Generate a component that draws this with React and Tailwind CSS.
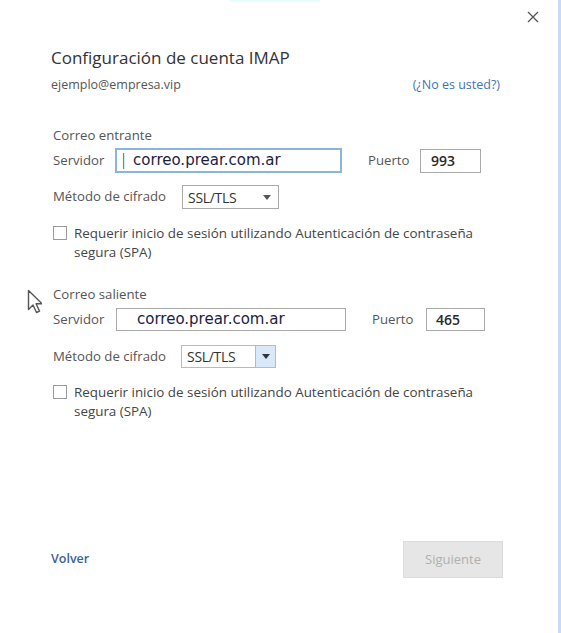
import React from "react";

const Caret = ({ className }) => (
  <svg width="8" height="5" viewBox="0 0 8 5" className={className}>
    <path d="M0 0h8L4 5z" fill="currentColor" />
  </svg>
);

const SpaCheck = () => (
  <div className="flex items-start gap-[7px] text-[13.4px] leading-[19px] text-[#444]">
    <div className="mt-[2px] h-[14px] w-[14px] shrink-0 border border-[#9a9a9a] bg-white" />
    <div>
      <div>Requerir inicio de sesión utilizando Autenticación de contraseña</div>
      <div>segura (SPA)</div>
    </div>
  </div>
);

export default function App() {
  return (
    <div
      className="relative h-[633px] w-[561px] overflow-hidden bg-white border-r-[3px] border-[#c7dbf3]"
      style={{ fontFamily: '"Open Sans", "Noto Sans", sans-serif' }}
    >
      {/* top faint strip */}
      <div className="absolute left-[230px] top-0 h-[2px] w-[90px] bg-[#e8fbff]" />

      {/* close */}
      <svg
        className="absolute left-[527px] top-[11px]"
        width="12"
        height="12"
        viewBox="0 0 12 12"
      >
        <path d="M1 1L11 11M11 1L1 11" stroke="#555" strokeWidth="1.3" />
      </svg>

      {/* mouse pointer */}
      <svg
        className="absolute left-[27px] top-[289px]"
        width="15"
        height="25"
        viewBox="0 0 15 25"
      >
        <path
          d="M1.5 1.5v19l4.5-4.5 3.5 7.5 3-1.4-3.4-7.3h6z"
          fill="#fff"
          stroke="#555"
          strokeWidth="1.4"
          strokeLinejoin="round"
        />
      </svg>

      <div className="flex flex-col pl-[51px] pr-[58px]">
        <h1 className="mt-[46px] text-[17px] leading-[24px] text-[#333]">
          Configuración de cuenta IMAP
        </h1>
        <div className="mt-[6px] flex items-center justify-between text-[12.5px] leading-[18px]">
          <span className="text-[#555]">ejemplo@empresa.vip</span>
          <span className="text-[#3f73b4]">(¿No es usted?)</span>
        </div>

        {/* incoming */}
        <div className="pl-[2px]">
          <div className="mt-[32px] text-[13.2px] leading-[18px] text-[#555]">
            Correo entrante
          </div>
          <div className="mt-[4px] flex items-center text-[13.2px] text-[#555]">
            <span className="w-[62px]">Servidor</span>
            <div
              className="flex h-[25px] w-[227px] items-center border-2 border-[#8db4de] pl-[4px] text-[15px] text-[#1c1d3f]"
              style={{ fontFamily: '"DejaVu Sans", sans-serif' }}
            >
              <span className="mr-[7px] font-light">|</span>
              correo.prear.com.ar
            </div>
            <span className="ml-[26px] w-[52px]">Puerto</span>
            <div className="flex h-[24px] w-[61px] items-center border border-[#aaa] pl-[10px] text-[14px] font-semibold text-[#2a2a2a]">
              993
            </div>
          </div>
          <div className="mt-[12px] flex items-center text-[13.2px] text-[#555]">
            <span className="w-[129px]">Método de cifrado</span>
            <div className="flex h-[24px] w-[97px] items-center justify-between border border-[#aaa] pl-[5px] pr-[7px] text-[14px] text-[#333]">
              <span className="tracking-[-0.3px]">SSL/TLS</span>
              <Caret className="text-[#555]" />
            </div>
          </div>
          <div className="mt-[15px]">
            <SpaCheck />
          </div>

          {/* outgoing */}
          <div className="mt-[23px] text-[13.2px] leading-[18px] text-[#555]">
            Correo saliente
          </div>
          <div className="mt-[5px] flex items-center text-[13.2px] text-[#555]">
            <span className="w-[63px]">Servidor</span>
            <div
              className="flex h-[23px] w-[230px] items-center border border-[#aaa] pl-[20px] text-[15px] text-[#1c1d3f]"
              style={{ fontFamily: '"DejaVu Sans", sans-serif' }}
            >
              correo.prear.com.ar
            </div>
            <span className="ml-[26px] w-[54px]">Puerto</span>
            <div className="flex h-[23px] w-[59px] items-center border border-[#aaa] pl-[9px] text-[14px] font-semibold text-[#2a2a2a]">
              465
            </div>
          </div>
          <div className="mt-[14px] flex items-center text-[13.2px] text-[#555]">
            <span className="w-[128px]">Método de cifrado</span>
            <div className="flex h-[23px] w-[95px] items-stretch border border-[#9cc0e6] text-[14px] text-[#333]">
              <span className="flex flex-1 items-center pl-[5px] tracking-[-0.3px]">SSL/TLS</span>
              <span className="flex w-[20px] items-center justify-center border-l border-[#9cc0e6] bg-[#d9e9f9]">
                <Caret className="text-[#333]" />
              </span>
            </div>
          </div>
          <div className="mt-[15px]">
            <SpaCheck />
          </div>
        </div>

        {/* footer */}
        <div className="mr-[-3px] mt-[120px] flex items-center justify-between">
          <span className="text-[12.5px] font-semibold text-[#3b5f99]">Volver</span>
          <div className="flex h-[37px] w-[100px] items-center justify-center border border-[#dcdcdc] bg-[#e6e6e6] text-[13px] text-[#b0b0b0]">
            Siguiente
          </div>
        </div>
      </div>
    </div>
  );
}
